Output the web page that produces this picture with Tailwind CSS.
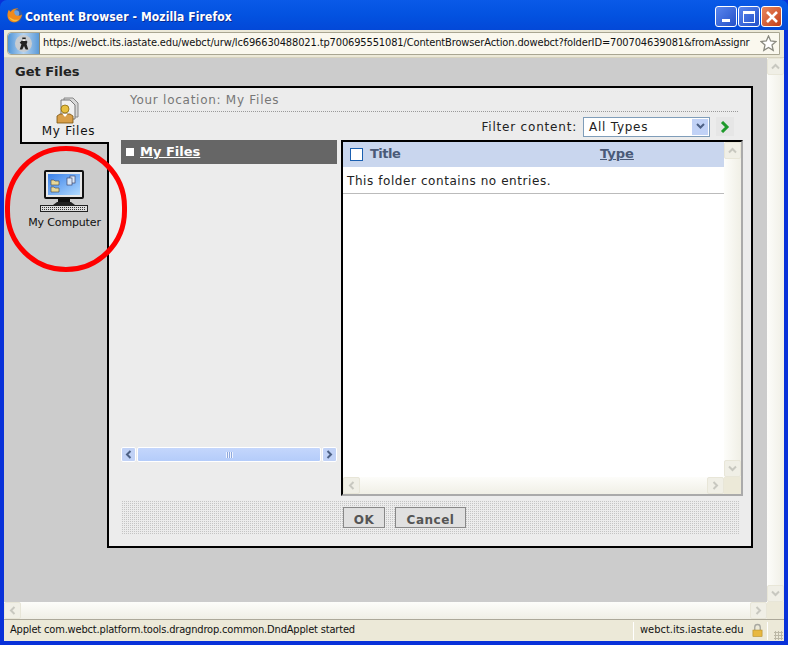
<!DOCTYPE html>
<html><head><meta charset="utf-8"><script src="https://cdn.jsdelivr.net/npm/@tailwindcss/browser@4"></script></head>
<body class="m-0 overflow-hidden">
<div class="relative w-[788px] h-[645px] flex flex-col bg-[#0831d9] font-['DejaVu_Sans',sans-serif] text-[13px] text-[#222] overflow-hidden">
  <!-- title bar -->
  <div class="h-[30px] shrink-0 flex items-center pl-[6px] pr-[6px] bg-gradient-to-b from-[#0a5ae8] via-[#0352e0] to-[#0348d8] rounded-t-[7px]">
    <svg width="17" height="17" viewBox="0 0 18 18" class="shrink-0 mt-[1px]"><circle cx="9.500" cy="9" r="8" fill="#2a5bb0"/><circle cx="10.500" cy="7" r="3.500" fill="#6fa0dc"/><path d="M3 3c1 1 1 2 2 2 2-3 6-4 8-3-3 0-5 2-4 5 1 3 5 3 8 1-1 6-6 9-10 8C2 15 0 9 3 3z" fill="#f08a1c"/><path d="M3 10c1 3 4 5 7 5 2 0 3-1 4-2-3 1-7 1-11-3z" fill="#f8c040"/></svg>
    <span class="ml-[2px] font-['DejaVu_Sans_Condensed','DejaVu_Sans',sans-serif] font-bold text-[12px] tracking-[0.1px] text-white [text-shadow:1px_1px_0_#0a2a90] mt-[3px]">Content Browser - Mozilla Firefox</span>
    <div class="ml-auto flex gap-[1px] mt-[3px]">
      <div class="w-[22px] h-[21px] rounded-[3px] border border-white bg-gradient-to-br from-[#5a86ee] to-[#2450c8] relative"><div class="absolute left-[6px] bottom-[4px] w-[8px] h-[3px] bg-white"></div></div>
      <div class="w-[22px] h-[21px] rounded-[3px] border border-white bg-gradient-to-br from-[#5a86ee] to-[#2450c8] flex items-center justify-center"><div class="w-[12px] h-[12px] border border-white border-t-[3px]"></div></div>
      <div class="w-[21px] h-[21px] rounded-[3px] border border-white bg-gradient-to-br from-[#e8865c] to-[#c43c14] flex items-center justify-center">
        <svg width="14" height="14" viewBox="0 0 14 14"><path d="M2 2l10 10M12 2L2 12" stroke="#fff" stroke-width="2.600"/></svg>
      </div>
    </div>
  </div>
  <div class="flex-1 min-h-0 mx-[4px] mb-[4px] flex flex-col bg-[#ece9d8]">
    <!-- address bar -->
    <div class="h-[28px] shrink-0 flex items-center pl-[3px] pr-[4px] border-b border-[#d8d4c0]">
      <div class="h-[23px] flex-1 flex items-center bg-[#faf8ee] border border-[#a9a692] rounded-l-[4px] -mt-[1px]">
        <div class="w-[32px] h-full shrink-0 rounded-l-[4px] bg-gradient-to-r from-[#4f95d8] via-[#b6d4f0] to-[#5a9ad8] flex items-center justify-center border-r border-[#8a8a78]">
          <div class="w-[17px] h-[17px] rounded-full bg-[#c8ccd0] flex items-center justify-center">
          <svg width="12" height="15" viewBox="0 0 14 16"><path d="M5 1h4v3l2 2-1 3 2 6H9L7 11l-2 4H2l2-6-2-2 3-3z" fill="#222"/><rect x="5" y="3" width="4" height="2" fill="#fff"/></svg>
          </div>
        </div>
        <span class="ml-[3px] text-[11px] whitespace-nowrap w-[710px] shrink-0 font-['DejaVu_Sans_Condensed','DejaVu_Sans',sans-serif] text-[#111] tracking-[-0.135px]">https://webct.its.iastate.edu/webct/urw/lc696630488021.tp700695551081/ContentBrowserAction.dowebct?folderID=700704639081&amp;fromAssignr</span>
        <svg width="17" height="17" viewBox="0 0 17 17" class="ml-auto mr-[2px] shrink-0"><path d="M8.500 1l2.200 5 5.300.5-4 3.500 1.200 5.300-4.700-2.800-4.700 2.800 1.200-5.300-4-3.500 5.300-.5z" fill="#fff" stroke="#8a8a80" stroke-width="1.300"/></svg>
      </div>
    </div>
    <!-- page + v scrollbar -->
    <div class="flex-1 min-h-0 flex">
      <div class="flex-1 min-w-0 flex flex-col bg-[#cccccc] pl-[16px] pr-[14px]">
        <div class="h-[28px] shrink-0 pt-[5px] -ml-[5px] font-bold text-[13px] leading-[18px] text-[#222]">Get Files</div>
        <!-- panel -->
        <div class="flex h-[462px] shrink-0">
          <div class="w-[89px] shrink-0 flex flex-col">
            <div class="h-[58px] shrink-0 bg-[#ececec] border-2 border-r-0 border-black flex flex-col items-center pt-[8px] relative z-10">
              <svg width="26" height="28" viewBox="0 0 26 28" class="ml-[5px]">
                <path d="M9 2h9l5 5v14H9z" fill="#d8d8d8" stroke="#888"/><path d="M6 4h9l5 5v14H6z" fill="#f0f0f0" stroke="#777"/>
                <circle cx="10" cy="13" r="4" fill="#e8c040" stroke="#8a6a10" stroke-width=".8"/><path d="M2 27v-7l3-2h10l3 2v7z" fill="#d89f4a" stroke="#7a5410" stroke-width=".8"/><path d="M7.500 18l2.500 3 2.500-3z" fill="#fff"/>
              </svg>
              <span class="text-[12px] leading-[14px] text-[#111] tracking-[0.75px] ml-[6px]">My Files</span>
            </div>
            <div class="flex-1 border-r-2 border-black flex flex-col items-center pt-[26px]">
              <svg width="48" height="42" viewBox="0 0 48 42">
                <defs><linearGradient id="scr" x1="0" y1="0" x2="1" y2="1"><stop offset="0" stop-color="#3a80e8"/><stop offset="1" stop-color="#b0daff"/></linearGradient></defs>
                <rect x="5" y="1" width="38" height="27" rx="1" fill="#e8e8e8" stroke="#111" stroke-width="2"/>
                <rect x="8" y="4" width="32" height="21" fill="url(#scr)"/>
                <path d="M11 10h3l1 1h4v4h-8z" fill="#e8d898" stroke="#444" stroke-width=".6"/><path d="M11 17h3l1 1h4v4h-8z" fill="#e8d898" stroke="#444" stroke-width=".6"/>
                <rect x="30" y="6" width="5" height="7" fill="#dbe8f8" stroke="#335" stroke-width=".6"/><rect x="27" y="8" width="5" height="7" fill="#dbe8f8" stroke="#335" stroke-width=".6"/>
                <rect x="18" y="29" width="12" height="3" fill="#111"/><path d="M13 35l4-3h14l4 3z" fill="#222"/>
                <rect x=".5" y="35.500" width="47" height="6" fill="#ddd" stroke="#222"/><path d="M2 37.500h44M2 39.500h44" stroke="#333" stroke-dasharray="1 1"/>
              </svg>
              <span class="text-[11px] leading-[14px] mt-[4px] ml-[2px] text-[#111] tracking-[-0.15px]">My Computer</span>
            </div>
          </div>
          <div class="flex-1 min-w-0 bg-[#ececec] border-t-2 border-r-2 border-b-2 border-black flex flex-col pl-[12px] pr-[8px]">
            <div class="h-[24px] shrink-0 mr-[5px] pl-[9px] border-b border-dotted border-[#999] text-[12px] leading-[25px] text-[#777] tracking-[0.73px]">Your location: My Files</div>
            <div class="h-[28px] shrink-0 flex items-center justify-end text-[12px] text-[#222] pr-[9px] pt-[1px]">
              <span class="tracking-[0.8px]">Filter content:</span>
              <div class="ml-[6px] w-[127px] h-[20px] bg-white border border-[#7f9db9] flex items-center pl-[5px] tracking-[0.75px]">All Types
                <div class="ml-auto mr-[1px] w-[16px] h-[16px] bg-[#c1d2f6] flex items-center justify-center"><svg width="9" height="7" viewBox="0 0 9 7"><path d="M1 1l3.500 3.500L8 1" fill="none" stroke="#4d6185" stroke-width="2"/></svg></div>
              </div>
              <div class="ml-[6px] w-[18px] h-[19px] bg-[#e6e6e6] flex items-center justify-center"><svg width="10" height="12" viewBox="0 0 10 12"><path d="M2 1l5 5-5 5" fill="none" stroke="#1f9a2c" stroke-width="3"/></svg></div>
            </div>
            <div class="flex flex-1 min-h-0 gap-[4px]">
              <!-- tree -->
              <div class="w-[216px] shrink-0 flex flex-col h-[324px]">
                <div class="h-[24px] shrink-0 bg-[#666666] flex items-center pl-[5px] text-white font-bold text-[13px]">
                  <span class="w-[8px] h-[8px] bg-white mr-[6px]"></span><span class="underline">My Files</span>
                </div>
                <div class="flex-1"></div>
                <div class="h-[15px] shrink-0 flex gap-[1px] mb-[2px]">
                  <div class="w-[15px] rounded-[2px] border border-white bg-[#c1d2f6] flex items-center justify-center"><svg width="7" height="9" viewBox="0 0 7 9"><path d="M5.500 1L2 4.500 5.500 8" fill="none" stroke="#4d6185" stroke-width="2"/></svg></div>
                  <div class="flex-1 rounded-[2px] border border-white bg-gradient-to-b from-[#c4d6fc] to-[#b4ccfa] flex items-center justify-center"><div class="w-[7px] h-[6px] bg-[repeating-linear-gradient(90deg,#eef3ff_0_1px,#8ea8dc_1px_2px)]"></div></div>
                  <div class="w-[15px] rounded-[2px] border border-white bg-[#c1d2f6] flex items-center justify-center"><svg width="7" height="9" viewBox="0 0 7 9"><path d="M1.500 1L5 4.500 1.500 8" fill="none" stroke="#4d6185" stroke-width="2"/></svg></div>
                </div>
              </div>
              <!-- list -->
              <div class="flex-1 min-w-0 flex flex-col h-[356px] border-2 border-t-black border-l-black border-r-[#aaa] border-b-[#aaa] bg-white">
                <div class="flex flex-1 min-h-0">
                  <div class="flex-1 min-w-0 flex flex-col">
                    <div class="h-[25px] shrink-0 bg-[#c9d6ee] flex items-center pl-[7px] pb-[1px] font-bold text-[13px] text-[#4a5a78]">
                      <span class="w-[13px] h-[13px] bg-white border border-[#1a5fb0] mr-[7px]"></span><span class="w-[230px] tracking-[-0.5px]">Title</span><span class="underline">Type</span>
                    </div>
                    <div class="h-[27px] shrink-0 border-b border-[#bbb] pl-[4px] text-[12px] leading-[28px] tracking-[0.575px] text-[#222]">This folder contains no entries.</div>
                  </div>
                  <div class="w-[17px] shrink-0 bg-gradient-to-r from-[#fdfdfa] to-[#f0efe6] flex flex-col justify-between">
                    <div class="h-[17px] rounded-[2px] border border-[#e8e6d8] bg-[#f0efe6] flex items-center justify-center"><svg width="9" height="7" viewBox="0 0 9 7"><path d="M1 5.500l3.500-3.500L8 5.500" fill="none" stroke="#c8c8c0" stroke-width="2"/></svg></div>
                    <div class="h-[17px] rounded-[2px] border border-[#e8e6d8] bg-[#f0efe6] flex items-center justify-center"><svg width="9" height="7" viewBox="0 0 9 7"><path d="M1 1.500L4.500 5 8 1.500" fill="none" stroke="#c8c8c0" stroke-width="2"/></svg></div>
                  </div>
                </div>
                <div class="h-[17px] shrink-0 flex bg-gradient-to-b from-[#fdfdfa] to-[#f0efe6]">
                  <div class="w-[17px] rounded-[2px] border border-[#e8e6d8] bg-[#f0efe6] flex items-center justify-center"><svg width="7" height="9" viewBox="0 0 7 9"><path d="M5.500 1L2 4.500 5.500 8" fill="none" stroke="#c8c8c0" stroke-width="2"/></svg></div>
                  <div class="flex-1"></div>
                  <div class="w-[17px] rounded-[2px] border border-[#e8e6d8] bg-[#f0efe6] flex items-center justify-center"><svg width="7" height="9" viewBox="0 0 7 9"><path d="M1.500 1L5 4.500 1.500 8" fill="none" stroke="#c8c8c0" stroke-width="2"/></svg></div>
                  <div class="w-[17px] bg-[#ece9d8]"></div>
                </div>
              </div>
            </div>
            <!-- footer -->
            <div class="h-[33px] shrink-0 mb-[12px] mr-[4px] bg-[conic-gradient(#c4c4c4_0_25%,#ececec_0_100%)] bg-[length:2px_2px] flex items-center pl-[222px] gap-[10px] font-bold text-[12px] text-[#555] tracking-[0.5px]">
              <div class="w-[42px] h-[21px] pt-[4px] bg-[#e0e0e0] border border-[#888] flex items-center justify-center">OK</div>
              <div class="w-[71px] h-[21px] pt-[4px] bg-[#e0e0e0] border border-[#888] flex items-center justify-center">Cancel</div>
            </div>
          </div>
        </div>
        <div class="flex-1"></div>
      </div>
      <div class="w-[17px] shrink-0 bg-gradient-to-r from-[#fdfdfa] to-[#f0efe6] flex flex-col justify-between">
        <div class="h-[17px] rounded-[2px] border border-[#e8e6d8] bg-[#f0efe6] flex items-center justify-center"><svg width="9" height="7" viewBox="0 0 9 7"><path d="M1 5.500l3.500-3.500L8 5.500" fill="none" stroke="#c8c8c0" stroke-width="2"/></svg></div>
        <div class="h-[17px] rounded-[2px] border border-[#e8e6d8] bg-[#f0efe6] flex items-center justify-center"><svg width="9" height="7" viewBox="0 0 9 7"><path d="M1 1.500L4.500 5 8 1.500" fill="none" stroke="#c8c8c0" stroke-width="2"/></svg></div>
      </div>
    </div>
    <!-- h scrollbar -->
    <div class="h-[17px] shrink-0 flex bg-gradient-to-b from-[#fdfdfa] to-[#f0efe6]">
      <div class="w-[17px] rounded-[2px] border border-[#e8e6d8] bg-[#f0efe6] flex items-center justify-center"><svg width="7" height="9" viewBox="0 0 7 9"><path d="M5.500 1L2 4.500 5.500 8" fill="none" stroke="#c8c8c0" stroke-width="2"/></svg></div>
      <div class="flex-1"></div>
      <div class="w-[17px] rounded-[2px] border border-[#e8e6d8] bg-[#f0efe6] flex items-center justify-center"><svg width="7" height="9" viewBox="0 0 7 9"><path d="M1.500 1L5 4.500 1.500 8" fill="none" stroke="#c8c8c0" stroke-width="2"/></svg></div>
      <div class="w-[17px] bg-[#ece9d8]"></div>
    </div>
    <!-- status bar -->
    <div class="h-[22px] shrink-0 flex items-center border-t border-[#aca899] text-[11px] font-['DejaVu_Sans_Condensed','DejaVu_Sans',sans-serif] text-[#111] pl-[6px]">
      <span class="tracking-[-0.17px]">Applet com.webct.platform.tools.dragndrop.common.DndApplet started</span>
      <div class="ml-auto w-[134px] h-[18px] flex items-center border-l border-white pl-[6px]">webct.its.iastate.edu
        <svg width="11" height="15" viewBox="0 0 12 15" class="ml-auto mr-[4px] shrink-0"><path d="M3 7V4a3 3 0 0 1 6 0v3" fill="none" stroke="#a8a8a0" stroke-width="1.500"/><rect x="1" y="7" width="10" height="7" fill="#e8b840" stroke="#b08820" stroke-width=".6"/></svg>
      </div>
      <div class="w-[17px] h-[18px] border-l border-white relative"><div class="absolute right-[1px] bottom-0 w-[9px] h-[9px] bg-[radial-gradient(#bcb8a6_50%,transparent_50%)] bg-[length:3px_3px]"></div></div>
    </div>
  </div>
  <!-- red annotation -->
  <div class="absolute left-[5px] top-[146px] w-[122px] h-[126px] rounded-full border-[5px] border-[#ff0000]"></div>
</div>
</body></html>
